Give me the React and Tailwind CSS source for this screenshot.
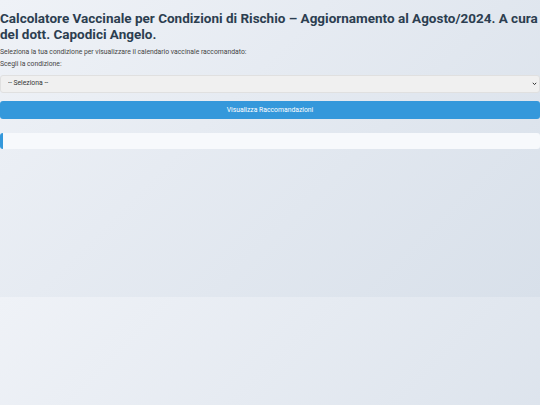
export default function App() {
  return (
    <div className="min-h-[405px] bg-[linear-gradient(135deg,#eff2f7_0%,#d8e0ea_100%)] bg-[length:100%_297px] bg-repeat font-['Roboto',sans-serif] text-[#333]">
      <div className="flex flex-col">
        <h1 className="pt-[9.5px] text-[13.5px] font-bold leading-[16px] text-[#2c3e50]">
          Calcolatore Vaccinale per Condizioni di Rischio – Aggiornamento al Agosto/2024. A cura del dott. Capodici Angelo.
        </h1>
        <p className="mt-[4.5px] text-[6.8px] leading-[12px] text-[#444]">
          Seleziona la tua condizione per visualizzare il calendario vaccinale raccomandato:
        </p>
        <label className="text-[6.8px] leading-[12px] text-[#444]">Scegli la condizione:</label>
        <div className="relative mt-[4.5px] leading-none">
          <select className="block h-[18px] w-full appearance-none rounded-[3px] border border-[#e0e0e0] bg-[#f0f0f0] px-[7px] text-[6.8px] text-[#333]">
            <option>-- Seleziona --</option>
          </select>
          <svg className="pointer-events-none absolute right-[3px] top-[7.5px]" width="5" height="4" viewBox="0 0 5 4">
            <path d="M0.8 0.8 L2.5 2.6 L4.2 0.8" fill="none" stroke="#333" strokeWidth="1" />
          </svg>
        </div>
        <button className="mt-[8.5px] h-[18px] w-full rounded-[3px] bg-[#3498db] text-[6.8px] text-white">
          Visualizza Raccomandazioni
        </button>
        <div className="mt-[13.5px] h-[16px] rounded-[3px] border-l-[3px] border-[#3498db] bg-[#f7f9fc]" />
      </div>
    </div>
  );
}
